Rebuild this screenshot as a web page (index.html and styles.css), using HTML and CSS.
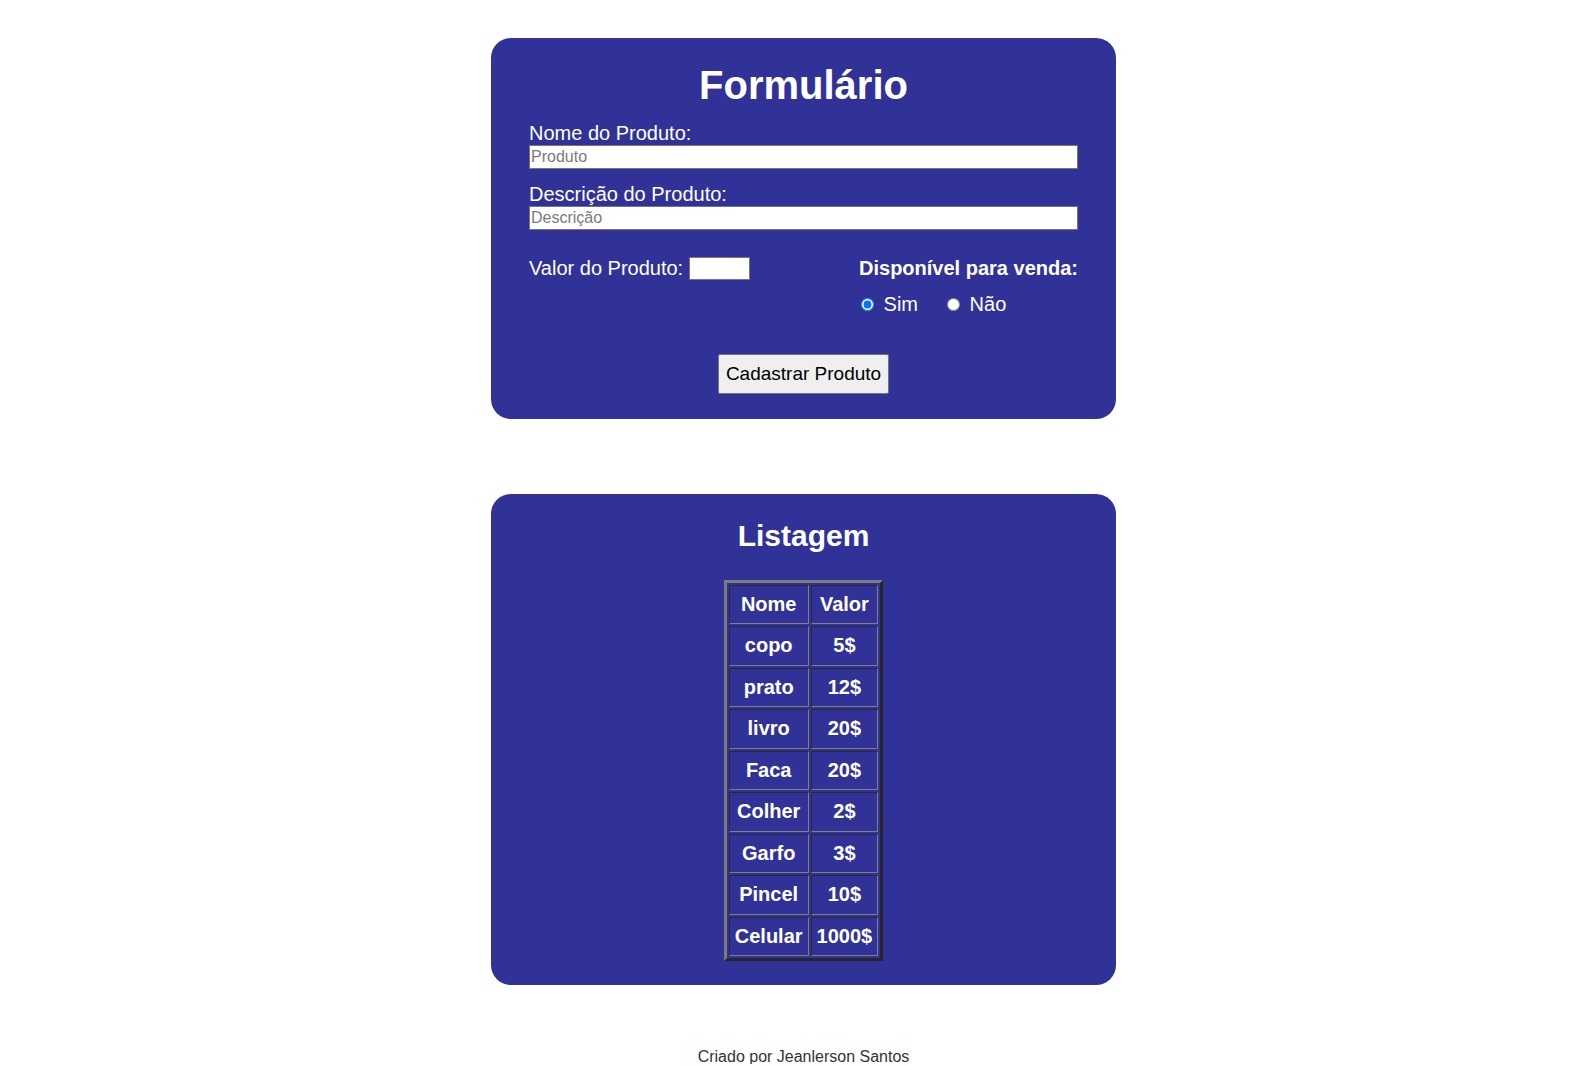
FILE: index.html
```html
<!DOCTYPE html>
<html lang="pt-BR">
<head>
<meta charset="utf-8">
<title>Cadastro de Produtos</title>
<link rel="stylesheet" href="styles.css">
</head>
<body>
<main class="page">
  <section class="card form-card">
    <h1 class="title">Formulário</h1>
    <form class="form">
      <label class="field-label" for="nome">Nome do Produto:</label>
      <input class="text-input" id="nome" type="text" placeholder="Produto">
      <label class="field-label" for="desc">Descrição do Produto:</label>
      <input class="text-input" id="desc" type="text" placeholder="Descrição">
      <div class="row">
        <div class="valor">
          <label for="valor">Valor do Produto:</label>
          <input class="valor-input" id="valor" type="text">
        </div>
        <div class="disp">
          <div class="disp-title">Disponível para venda:</div>
          <div class="options">
            <label class="option"><input class="radio" type="radio" name="disp" checked> Sim</label>
            <label class="option"><input class="radio" type="radio" name="disp"> Não</label>
          </div>
        </div>
      </div>
      <div class="actions"><button type="button" class="btn">Cadastrar Produto</button></div>
    </form>
  </section>

  <section class="card list-card">
    <h2 class="subtitle">Listagem</h2>
    <table class="table">
      <thead>
        <tr><th>Nome</th><th>Valor</th></tr>
      </thead>
      <tbody>
        <tr><td>copo</td><td>5$</td></tr>
        <tr><td>prato</td><td>12$</td></tr>
        <tr><td>livro</td><td>20$</td></tr>
        <tr><td>Faca</td><td>20$</td></tr>
        <tr><td>Colher</td><td>2$</td></tr>
        <tr><td>Garfo</td><td>3$</td></tr>
        <tr><td>Pincel</td><td>10$</td></tr>
        <tr><td>Celular</td><td>1000$</td></tr>
      </tbody>
    </table>
  </section>

  <footer class="footer">Criado por Jeanlerson Santos</footer>
</main>
</body>
</html>
```

FILE: styles.css
```css
html, body {
  background: #ffffff;
}

body {
  margin: 0;
  padding: 38px 0 0 22px;
  font-family: "Liberation Sans", Arial, sans-serif;
  color: #000;
}

.card {
  width: 625px;
  box-sizing: border-box;
  margin: 0 auto;
  background: #303298;
  border-radius: 20px;
  color: #ffffff;
}

.form-card {
  padding: 25px 38px 25px 38px;
}

.title {
  margin: 0;
  font-size: 40px;
  font-weight: bold;
  line-height: normal;
  text-align: center;
}

.form {
  margin: 0;
}

.field-label {
  display: block;
  margin-top: 14px;
  font-size: 20px;
  line-height: 23px;
}

.text-input {
  display: block;
  width: 100%;
  height: 24px;
  box-sizing: border-box;
  margin: 0;
  padding: 1px 1px;
  border: 1px solid #767676;
  background: #ffffff;
  font-family: "Liberation Sans", Arial, sans-serif;
  font-size: 16px;
  color: #000;
}

.text-input::placeholder {
  color: #7a7a7a;
}

.row {
  display: flex;
  justify-content: space-between;
  align-items: flex-start;
  margin-top: 27px;
  font-size: 20px;
  line-height: 23px;
}

.valor {
  display: flex;
  align-items: center;
  gap: 6px;
}

.valor-input {
  width: 61px;
  height: 23px;
  box-sizing: border-box;
  margin: 0;
  padding: 1px;
  border: 1px solid #767676;
  background: #ffffff;
}

.disp-title {
  font-weight: bold;
}

.options {
  display: flex;
  gap: 27px;
  margin-top: 13px;
}

.option {
  display: block;
}

.radio {
  width: 13px;
  height: 13px;
  margin: 0 4px 2px 2px;
}

.actions {
  display: flex;
  justify-content: center;
  margin-top: 38px;
}

.btn {
  font-family: "Liberation Sans", Arial, sans-serif;
  font-size: 19px;
  line-height: normal;
  padding: 8px 7px;
  background: #efefef;
  color: #000;
  border: 1px solid #767676;
  border-radius: 2px;
}

.list-card {
  margin-top: 75px;
  padding: 25px 0 24px 0;
}

.subtitle {
  margin: 0;
  font-size: 30px;
  font-weight: bold;
  line-height: normal;
  text-align: center;
}

.table {
  margin: 27px auto 0;
  border-collapse: separate;
  border-spacing: 2px;
  border-style: solid;
  border-width: 3px;
  border-color: #7c7c7c #262626 #262626 #7c7c7c;
}

.table th,
.table td {
  padding: 7px 5px;
  font-size: 20px;
  line-height: 23.45px;
  font-weight: bold;
  text-align: center;
  color: #ffffff;
  border-style: solid;
  border-width: 1px;
  border-color: #2a2a2a #7f7f7f #7f7f7f #2a2a2a;
}

.footer {
  margin-top: 64px;
  text-align: center;
  font-size: 16px;
  line-height: 15px;
  color: #333333;
}
```
